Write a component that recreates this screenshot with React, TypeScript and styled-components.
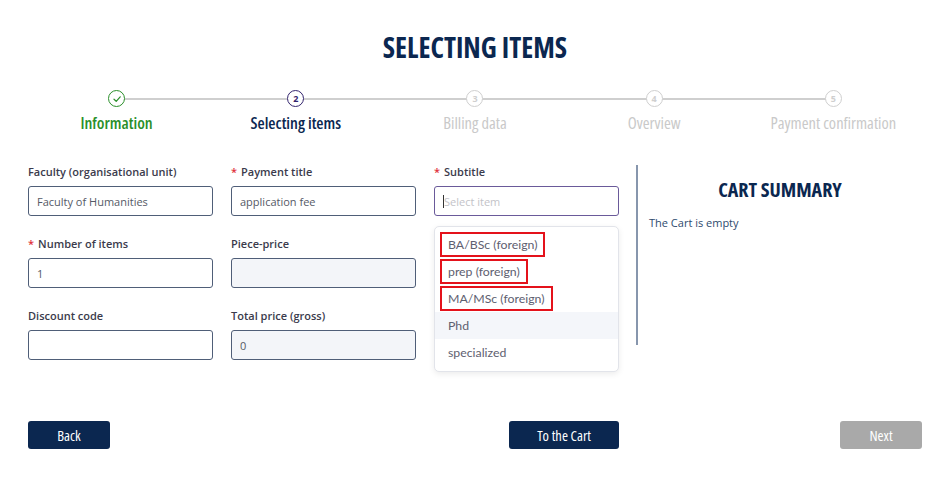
import React from 'react';
import styled, { createGlobalStyle } from 'styled-components';

const NAVY = '#0b2750';
const CONDENSED = `"Open Sans", "Liberation Sans Narrow", sans-serif`;

const GlobalStyle = createGlobalStyle`
  * { box-sizing: border-box; }
  body {
    margin: 0;
    background: #ffffff;
    font-family: "Open Sans", "Liberation Sans", sans-serif;
  }
`;

type StepState = 'done' | 'active' | 'todo';

const steps: { label: string; state: StepState }[] = [
  { label: 'Information', state: 'done' },
  { label: 'Selecting items', state: 'active' },
  { label: 'Billing data', state: 'todo' },
  { label: 'Overview', state: 'todo' },
  { label: 'Payment confirmation', state: 'todo' },
];

const options = [
  { label: 'BA/BSc (foreign)', marked: true },
  { label: 'prep (foreign)', marked: true },
  { label: 'MA/MSc (foreign)', marked: true },
  { label: 'Phd', hovered: true },
  { label: 'specialized' },
];

const stepColor = (state: StepState) =>
  state === 'done' ? '#2a8f2a' : state === 'active' ? '#33246e' : '#cfcfcf';

const CheckIcon = () => (
  <svg width="10" height="10" viewBox="0 0 10 10" fill="none">
    <path d="M2 5.2 L4.2 7.3 L8.2 2.8" stroke="#2a8f2a" strokeWidth="1.2" strokeLinecap="round" strokeLinejoin="round" />
  </svg>
);

export default function App() {
  return (
    <>
      <GlobalStyle />
      <Page>
        <Title>SELECTING ITEMS</Title>

        <Stepper>
          {steps.map((step, i) => (
            <Step key={step.label}>
              <Circle $state={step.state}>{step.state === 'done' ? <CheckIcon /> : i + 1}</Circle>
              <StepLabel $state={step.state}>{step.label}</StepLabel>
            </Step>
          ))}
        </Stepper>

        <Main>
          <FormGrid>
            <Field>
              <Label>Faculty (organisational unit)</Label>
              <Input readOnly value="Faculty of Humanities" />
            </Field>
            <Field>
              <Label>
                <Req>*</Req>Payment title
              </Label>
              <Input readOnly value="application fee" />
            </Field>
            <Field>
              <Label>
                <Req>*</Req>Subtitle
              </Label>
              <SelectBox>
                <Caret />
                <Placeholder>Select item</Placeholder>
              </SelectBox>
              <Dropdown>
                {options.map((o) => (
                  <Option key={o.label} $hovered={!!o.hovered}>
                    <OptionText $marked={!!o.marked}>{o.label}</OptionText>
                  </Option>
                ))}
              </Dropdown>
            </Field>

            <Field>
              <Label>
                <Req>*</Req>Number of items
              </Label>
              <Input readOnly value="1" />
            </Field>
            <Field>
              <Label>Piece-price</Label>
              <Input readOnly $disabled value="" />
            </Field>
            <Field />

            <Field>
              <Label>Discount code</Label>
              <Input readOnly value="" />
            </Field>
            <Field>
              <Label>Total price (gross)</Label>
              <Input readOnly $disabled value="0" />
            </Field>
            <Field />
          </FormGrid>

          <Cart>
            <CartTitle>CART SUMMARY</CartTitle>
            <CartText>The Cart is empty</CartText>
          </Cart>
        </Main>

        <Footer>
          <LeftButtons>
            <Button>Back</Button>
            <Button>To the Cart</Button>
          </LeftButtons>
          <RightButtons>
            <Button $disabled>Next</Button>
          </RightButtons>
        </Footer>
      </Page>
    </>
  );
}

const Page = styled.div`
  width: 945px;
  height: 484px;
  padding: 29px 23px 0 28px;
`;

const Title = styled.h1`
  margin: 0;
  text-align: center;
  font-family: ${CONDENSED};
  font-stretch: 75%;
  font-weight: 700;
  font-size: 28px;
  line-height: 36px;
  color: ${NAVY};
`;

const Stepper = styled.div`
  position: relative;
  display: grid;
  grid-template-columns: repeat(5, 1fr);
  margin: 25px -1px 0 -1px;

  &::before {
    content: '';
    position: absolute;
    top: 8px;
    left: 10%;
    right: 10%;
    height: 1.5px;
    background: #cfcfcf;
  }
`;

const Step = styled.div`
  position: relative;
  display: flex;
  flex-direction: column;
  align-items: center;
  gap: 6px;
`;

const Circle = styled.div<{ $state: StepState }>`
  width: 17px;
  height: 17px;
  border-radius: 50%;
  border: 1.5px solid ${(p) => stepColor(p.$state)};
  background: #fff;
  display: flex;
  align-items: center;
  justify-content: center;
  font-size: 9px;
  font-weight: 700;
  color: ${(p) => stepColor(p.$state)};
  line-height: 1;
`;

const StepLabel = styled.div<{ $state: StepState }>`
  font-family: ${CONDENSED};
  font-stretch: 75%;
  font-size: 16.5px;
  line-height: 20px;
  font-weight: ${(p) => (p.$state === 'todo' ? 400 : 600)};
  color: ${(p) => (p.$state === 'done' ? '#2a8f2a' : p.$state === 'active' ? NAVY : '#c9c9c9')};
`;

const Main = styled.div`
  display: flex;
  gap: 17px;
  margin-top: 32px;
`;

const FormGrid = styled.div`
  display: grid;
  grid-template-columns: repeat(3, 185px);
  column-gap: 18px;
  row-gap: 21px;
`;

const Field = styled.div`
  position: relative;
  display: flex;
  flex-direction: column;
  gap: 7px;
`;

const Label = styled.label`
  font-size: 11px;
  line-height: 14px;
  font-weight: 600;
  color: #3b3b4c;
`;

const Req = styled.span`
  color: #e0333a;
  margin-right: 4px;
`;

const Input = styled.input<{ $disabled?: boolean }>`
  width: 185px;
  height: 30px;
  padding: 0 8px;
  border: 1px solid #4f5e78;
  border-radius: 3px;
  background: ${(p) => (p.$disabled ? '#f3f5f9' : '#fff')};
  font-family: "Open Sans", sans-serif;
  font-size: 11px;
  color: #555a66;
  outline: none;
`;

const SelectBox = styled.div`
  width: 185px;
  height: 30px;
  padding: 0 8px;
  border: 1px solid #6a5a9a;
  border-radius: 3px;
  display: flex;
  align-items: center;
`;

const Caret = styled.span`
  width: 1px;
  height: 13px;
  background: #333;
`;

const Placeholder = styled.span`
  font-size: 11px;
  color: #c3c3c8;
`;

const Dropdown = styled.div`
  position: absolute;
  top: 61px;
  left: 0;
  width: 185px;
  padding: 4px 0 5px;
  background: #fff;
  border: 1px solid #e2e4ea;
  border-radius: 5px;
  box-shadow: 0 2px 6px rgba(0, 0, 0, 0.08);
  z-index: 2;
`;

const Option = styled.div<{ $hovered: boolean }>`
  height: 27px;
  padding-left: 5px;
  display: flex;
  align-items: center;
  background: ${(p) => (p.$hovered ? '#f4f6fa' : '#fff')};
`;

const OptionText = styled.span<{ $marked: boolean }>`
  font-family: Lato, "Open Sans", sans-serif;
  font-size: 12.3px;
  color: #5e6070;
  padding: 2px 6px;
  line-height: 17px;
  border: 2.5px solid ${(p) => (p.$marked ? '#e4121b' : 'transparent')};
`;

const Cart = styled.div`
  width: 287px;
  height: 180px;
  border-left: 2px solid #8796ad;
  padding: 12px 11px 0;
`;

const CartTitle = styled.h2`
  margin: 0;
  text-align: center;
  font-family: ${CONDENSED};
  font-stretch: 75%;
  font-weight: 700;
  font-size: 20px;
  line-height: 26px;
  color: ${NAVY};
`;

const CartText = styled.p`
  margin: 12px 0 0;
  font-size: 11px;
  color: #2e4a6e;
`;

const Footer = styled.div`
  display: flex;
  gap: 19px;
  margin-top: 61px;
`;

const LeftButtons = styled.div`
  width: 591px;
  display: flex;
  justify-content: space-between;
`;

const RightButtons = styled.div`
  width: 284px;
  display: flex;
  justify-content: flex-end;
`;

const Button = styled.button<{ $disabled?: boolean }>`
  height: 28px;
  min-width: 82px;
  padding: 0 28px;
  border: none;
  border-radius: 3px;
  background: ${(p) => (p.$disabled ? '#a9a9a9' : NAVY)};
  color: #fff;
  font-family: ${CONDENSED};
  font-stretch: 75%;
  font-size: 14.5px;
  font-weight: 400;
  cursor: pointer;
`;
